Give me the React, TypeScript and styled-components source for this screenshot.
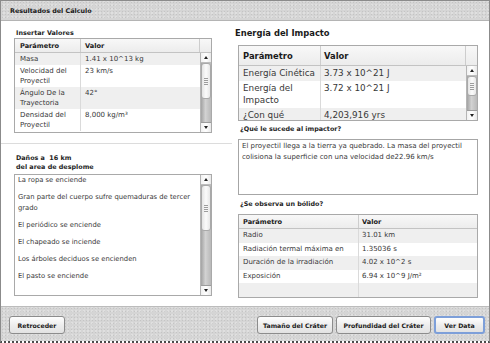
import React from "react";
import styled, { createGlobalStyle, css } from "styled-components";

const GlobalStyle = createGlobalStyle`
  html, body { margin: 0; padding: 0; background: #fff; }
  body { font-family: "DejaVu Sans", Verdana, sans-serif; color: #333; }
  * { box-sizing: border-box; }
`;

const noise = css`
  background-color: #d5d5d5;
  background-image:
    radial-gradient(rgba(0, 0, 0, 0.08) 0.6px, transparent 0.9px),
    radial-gradient(rgba(255, 255, 255, 0.4) 0.6px, transparent 0.9px);
  background-size: 3px 3px, 4px 4px;
  background-position: 0 0, 1px 2px;
`;

const Window = styled.div`
  width: 490px;
  height: 343px;
  border: 1px solid #8b8b8b;
  border-bottom: 2px dotted #4a4a4a;
  display: flex;
  flex-direction: column;
  background: #fff;
  overflow: hidden;
`;

const TitleBar = styled.div`
  ${noise};
  height: 20px;
  flex: none;
  border-bottom: 1px solid #b4b4b4;
  display: flex;
  align-items: center;
  padding-left: 9px;
  font-weight: bold;
  font-size: 6.4px;
  color: #1a1a1a;
`;

const Body = styled.div`
  flex: 1;
  display: flex;
  min-height: 0;
`;

const LeftCol = styled.div`
  width: 231px;
  flex: none;
  display: flex;
  flex-direction: column;
`;

const LeftTop = styled.section`
  padding: 8px 0 10px 13px;
  border-bottom: 1px solid #dcdcdc;
`;

const LeftBottom = styled.section`
  padding: 10px 0 0 13px;
`;

const RightCol = styled.div`
  flex: 1;
  padding: 6px 0 0 6px;
  display: flex;
  flex-direction: column;
`;

const Label = styled.div<{ $mt?: number }>`
  font-weight: bold;
  font-size: 6.4px;
  line-height: 9px;
  color: #1e1e1e;
  padding-left: 2px;
  white-space: pre;
  margin-top: ${(p) => p.$mt ?? 0}px;
`;

const BigTitle = styled.h2`
  margin: 0 0 6px -3px;
  font-size: 8.4px;
  line-height: 12px;
  font-weight: bold;
  color: #1a1a1a;
`;

const TableFrame = styled.div<{ $w: number; $h: number; $mt?: number }>`
  width: ${(p) => p.$w}px;
  height: ${(p) => p.$h}px;
  margin-top: ${(p) => p.$mt ?? 0}px;
  border: 1px solid #a9a9a9;
  display: flex;
  flex-direction: column;
  overflow: hidden;
  background: #fff;
  flex: none;
`;

const HeadRow = styled.div<{ $cols: string; $h: number; $fs: number }>`
  display: grid;
  grid-template-columns: ${(p) => p.$cols};
  height: ${(p) => p.$h}px;
  flex: none;
  background: linear-gradient(#f8f8f8, #ececec);
  border-bottom: 1px solid #c3c3c3;
  font-weight: bold;
  font-size: ${(p) => p.$fs}px;
  color: #1a1a1a;
`;

const HeadCell = styled.div<{ $pl: number }>`
  display: flex;
  align-items: center;
  padding-left: ${(p) => p.$pl}px;
  border-right: 1px solid #cdcdcd;
  white-space: nowrap;
  &:last-child {
    border-right: none;
  }
`;

const TableBody = styled.div`
  flex: 1;
  display: flex;
  min-height: 0;
`;

const Rows = styled.div`
  flex: 1;
  display: flex;
  flex-direction: column;
  overflow: hidden;
`;

const Row = styled.div<{
  $cols: string;
  $alt: boolean;
  $fs: number;
  $lh: number;
  $pb?: number;
  $fill?: boolean;
}>`
  display: grid;
  grid-template-columns: ${(p) => p.$cols};
  background: ${(p) => (p.$alt ? "#efefef" : "#ffffff")};
  font-size: ${(p) => p.$fs}px;
  line-height: ${(p) => p.$lh}px;
  color: #383838;
  flex: ${(p) => (p.$fill ? "1" : "none")};
  min-height: 0;
  & > div {
    padding-bottom: ${(p) => p.$pb ?? 1}px;
  }
`;

const Cell = styled.div<{ $pl: number }>`
  padding: 1px 2px 1px ${(p) => p.$pl}px;
  border-right: 1px solid #dadada;
  &:last-child {
    border-right: none;
  }
`;

/* Scrollbar */
const SB = styled.div`
  width: 11px;
  flex: none;
  display: flex;
  flex-direction: column;
  border-left: 1px solid #b5b5b5;
  background: linear-gradient(to right, #a3a3a3, #d2d2d2 45%, #b9b9b9);
`;

const SBBtn = styled.div<{ $pos: "top" | "bottom" }>`
  height: 10px;
  flex: none;
  display: flex;
  align-items: center;
  justify-content: center;
  background: linear-gradient(to right, #f1f1f1, #ffffff 50%, #e9e9e9);
  ${(p) =>
    p.$pos === "top"
      ? "border-bottom: 1px solid #bdbdbd;"
      : "border-top: 1px solid #9c9c9c;"}
`;

const Arrow = styled.span<{ $dir: "up" | "down" }>`
  width: 0;
  height: 0;
  border-left: 2.5px solid transparent;
  border-right: 2.5px solid transparent;
  ${(p) =>
    p.$dir === "up"
      ? "border-bottom: 3px solid #222;"
      : "border-top: 3px solid #222;"}
`;

const Thumb = styled.div<{ $h: number }>`
  height: ${(p) => p.$h}px;
  flex: none;
  background: linear-gradient(to right, #e4e4e4, #fbfbfb 50%, #e7e7e7);
  border: 1px solid #a9a9a9;
  border-radius: 3px;
  display: flex;
  align-items: center;
  justify-content: center;
`;

const Grip = styled.span`
  width: 4px;
  height: 7px;
  background: repeating-linear-gradient(#9c9c9c 0 1px, transparent 1px 2px);
`;

const TrackRest = styled.div`
  flex: 1;
`;

const Scrollbar: React.FC<{ thumb: number }> = ({ thumb }) => (
  <SB>
    <SBBtn $pos="top">
      <Arrow $dir="up" />
    </SBBtn>
    <Thumb $h={thumb}>
      <Grip />
    </Thumb>
    <TrackRest />
    <SBBtn $pos="bottom">
      <Arrow $dir="down" />
    </SBBtn>
  </SB>
);

/* List */
const ListBox = styled.div`
  width: 198px;
  height: 122px;
  margin-top: 2px;
  border: 1px solid #a9a9a9;
  display: flex;
  background: #fff;
`;

const ListItems = styled.div`
  flex: 1;
  overflow: hidden;
  font-size: 6.8px;
  line-height: 11px;
  color: #383838;
`;

const ListItem = styled.div`
  padding: 0 2px 6px 3px;
`;

const TextBox = styled.div`
  width: 240px;
  height: 56px;
  margin-top: 5px;
  border: 1px solid #a6a6a6;
  padding: 1px 3px;
  font-size: 7px;
  line-height: 11px;
  color: #383838;
  white-space: nowrap;
  background: #fff;
`;

/* Footer */
const Footer = styled.div`
  ${noise};
  height: 35px;
  flex: none;
  border-top: 1px solid #bcbcbc;
  display: flex;
  align-items: center;
  justify-content: space-between;
  padding: 2px 4px 0 8px;
`;

const BtnGroup = styled.div`
  display: flex;
  gap: 3px;
`;

const Btn = styled.button<{ $w: number; $default?: boolean }>`
  width: ${(p) => p.$w}px;
  height: 18px;
  padding: 0;
  border: 1px solid #8c8c8c;
  border-radius: 3px;
  background: linear-gradient(#fefefe, #ececec 55%, #e2e2e2);
  font-family: inherit;
  font-weight: bold;
  font-size: 6.2px;
  color: #1a1a1a;
  white-space: nowrap;
  text-align: center;
  ${(p) =>
    p.$default &&
    css`
      border: 2px solid #7d9fd9;
    `}
`;

const leftCols = "66px 1fr";
const leftData: [string, string][] = [
  ["Masa", "1.41 x 10^13 kg"],
  ["Velocidad del Proyectil", "23 km/s"],
  ["Ángulo De la Trayectoria", "42°"],
  ["Densidad del Proyectil", "8,000 kg/m³"],
];

const energyCols = "82px 1fr";
const energyData: [string, string][] = [
  ["Energía Cinética", "3.73 x 10^21 J"],
  ["Energía del Impacto", "3.72 x 10^21 J"],
  ["¿Con qué", "4,203,916 yrs"],
];

const bolidoCols = "120px 1fr";
const bolidoData: [string, string][] = [
  ["Radio", "31.01 km"],
  ["Radiación termal máxima en", "1.35036 s"],
  ["Duración de la irradiación", "4.02 x 10^2 s"],
  ["Exposición", "6.94 x 10^9 J/m²"],
];

const damages = [
  "La ropa se enciende",
  "Gran parte del cuerpo sufre quemaduras de tercer grado",
  "El periódico se enciende",
  "El chapeado se inciende",
  "Los árboles deciduos se encienden",
  "El pasto se enciende",
];

export default function App() {
  return (
    <>
      <GlobalStyle />
      <Window>
        <TitleBar>Resultados del Cálculo</TitleBar>
        <Body>
          <LeftCol>
            <LeftTop>
              <Label>Insertar Valores</Label>
              <TableFrame $w={198} $h={95}>
                <HeadRow $cols={`${leftCols} 11px`} $h={14} $fs={6.6}>
                  <HeadCell $pl={5}>Parámetro</HeadCell>
                  <HeadCell $pl={4}>Valor</HeadCell>
                  <HeadCell $pl={0} />
                </HeadRow>
                <TableBody>
                  <Rows>
                    {leftData.map(([k, v], i) => (
                      <Row key={k} $cols={leftCols} $alt={i % 2 === 0} $fs={7} $lh={10}>
                        <Cell $pl={5}>{k}</Cell>
                        <Cell $pl={4}>{v}</Cell>
                      </Row>
                    ))}
                  </Rows>
                  <Scrollbar thumb={36} />
                </TableBody>
              </TableFrame>
            </LeftTop>
            <LeftBottom>
              <Label>{"Daños a  16 km\ndel area de desplome"}</Label>
              <ListBox>
                <ListItems>
                  {damages.map((d) => (
                    <ListItem key={d}>{d}</ListItem>
                  ))}
                </ListItems>
                <Scrollbar thumb={46} />
              </ListBox>
            </LeftBottom>
          </LeftCol>
          <RightCol>
            <BigTitle>Energía del Impacto</BigTitle>
            <TableFrame $w={240} $h={76}>
              <HeadRow $cols={`${energyCols} 11px`} $h={20} $fs={8.4}>
                <HeadCell $pl={4}>Parámetro</HeadCell>
                <HeadCell $pl={3}>Valor</HeadCell>
                <HeadCell $pl={0} />
              </HeadRow>
              <TableBody>
                <Rows>
                  {energyData.map(([k, v], i) => (
                    <Row
                      key={k}
                      $cols={energyCols}
                      $alt={i % 2 === 0}
                      $fs={8.8}
                      $lh={12}
                      $pb={2}
                    >
                      <Cell $pl={4}>{k}</Cell>
                      <Cell $pl={3}>{v}</Cell>
                    </Row>
                  ))}
                </Rows>
                <Scrollbar thumb={20} />
              </TableBody>
            </TableFrame>
            <Label $mt={4}>¿Qué le sucede al impactor?</Label>
            <TextBox>
              El proyectil llega a la tierra ya quebrado. La masa del proyectil
              <br />
              colisiona la superficie con una velocidad de22.96 km/s
            </TextBox>
            <Label $mt={5}>¿Se observa un bólido?</Label>
            <TableFrame $w={240} $h={84} $mt={5}>
              <HeadRow $cols={bolidoCols} $h={14} $fs={6.6}>
                <HeadCell $pl={4}>Parámetro</HeadCell>
                <HeadCell $pl={3}>Valor</HeadCell>
              </HeadRow>
              <Rows>
                {bolidoData.map(([k, v], i) => (
                  <Row key={k} $cols={bolidoCols} $alt={i % 2 === 0} $fs={7} $lh={11.6}>
                    <Cell $pl={4}>{k}</Cell>
                    <Cell $pl={3}>{v}</Cell>
                  </Row>
                ))}
                <Row $cols={bolidoCols} $alt $fs={7} $lh={11.6} $fill>
                  <Cell $pl={4} />
                  <Cell $pl={3} />
                </Row>
              </Rows>
            </TableFrame>
          </RightCol>
        </Body>
        <Footer>
          <Btn $w={56}>Retroceder</Btn>
          <BtnGroup>
            <Btn $w={76}>Tamaño del Cráter</Btn>
            <Btn $w={95}>Profundidad del Cráter</Btn>
            <Btn $w={51} $default>
              Ver Data
            </Btn>
          </BtnGroup>
        </Footer>
      </Window>
    </>
  );
}
